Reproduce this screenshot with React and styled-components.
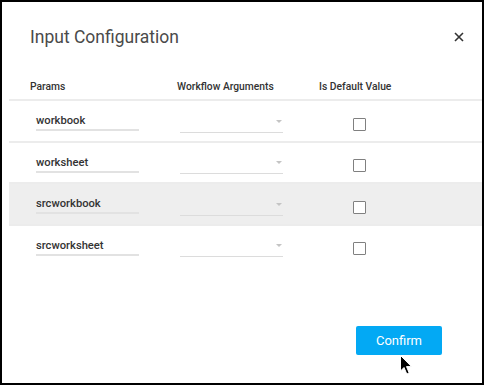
import React from 'react';
import styled, { createGlobalStyle } from 'styled-components';

const GlobalStyle = createGlobalStyle`
  html, body {
    margin: 0;
    padding: 0;
    background: #fff;
  }
  body {
    font-family: Roboto, "Liberation Sans", sans-serif;
  }
`;

const Frame = styled.div`
  position: relative;
  width: 484px;
  height: 385px;
  box-sizing: border-box;
  border: 2px solid #000;
  background: #fff;
  display: flex;
  flex-direction: column;
`;

const TitleBar = styled.div`
  display: flex;
  align-items: center;
  justify-content: space-between;
  height: 24px;
  margin-top: 23px;
  padding: 0 18px 0 28px;
`;

const Title = styled.h2`
  margin: 0;
  font-size: 17.5px;
  font-weight: 400;
  line-height: 24px;
  color: #4a4a4a;
`;

const CloseButton = styled.button`
  border: 0;
  background: none;
  padding: 0;
  width: 10px;
  height: 10px;
  display: flex;
  cursor: pointer;
`;

const Table = styled.div`
  margin: 30px 0 0 7px;
`;

const Grid = styled.div`
  display: grid;
  grid-template-columns: 147px 142px 1fr;
  align-items: center;
  padding-left: 21px;
`;

const HeadRow = styled(Grid)`
  height: 16px;
  padding-bottom: 4px;
  border-bottom: 2px solid #ececec;
`;

const HeadCell = styled.div`
  font-size: 10.3px;
  font-weight: 500;
  line-height: 16px;
  color: #333;
`;

const Row = styled(Grid)`
  height: 39.5px;
  border-bottom: ${p => (p.$last ? '0' : '2px solid #ececec')};
  background: ${p => (p.$shaded ? '#eeeeee' : 'transparent')};
`;

const ParamInput = styled.div`
  margin-left: 6px;
  width: 103px;
  box-sizing: border-box;
  padding-top: 3px;
  height: 21px;
  border-bottom: 2px solid #e2e2e2;
  font-size: 11.2px;
  font-weight: 500;
  line-height: 16px;
  color: #333;
`;

const Select = styled.div`
  margin: 2px 0 0 3px;
  width: 103px;
  height: 22px;
  box-sizing: border-box;
  border-bottom: 1px solid #dcdcdc;
  display: flex;
  align-items: center;
  justify-content: flex-end;
  padding-right: 1px;
`;

const Caret = styled.span`
  width: 0;
  height: 0;
  border-left: 3.5px solid transparent;
  border-right: 3.5px solid transparent;
  border-top: 3px solid #c4c4c4;
`;

const CheckBox = styled.span`
  margin: 7px 0 0 34px;
  width: 13px;
  height: 13px;
  box-sizing: border-box;
  border: 1.5px solid #808080;
  border-radius: 1px;
  background: #fff;
`;

const Footer = styled.div`
  margin-top: auto;
  display: flex;
  justify-content: flex-end;
  padding: 0 40px 28px 0;
`;

const ConfirmButton = styled.button`
  width: 86px;
  height: 29px;
  border: 0;
  border-radius: 2px;
  background: #03a9f4;
  color: #fff;
  font-family: Roboto, "Liberation Sans", sans-serif;
  font-size: 13px;
  font-weight: 400;
  cursor: pointer;
`;

const Pointer = styled.svg`
  position: absolute;
  left: 397px;
  top: 352px;
  pointer-events: none;
`;

const params = ['workbook', 'worksheet', 'srcworkbook', 'srcworksheet'];

export default function App() {
  return (
    <>
      <GlobalStyle />
      <Frame>
        <TitleBar>
          <Title>Input Configuration</Title>
          <CloseButton aria-label="Close">
            <svg width="10" height="10" viewBox="0 0 10 10">
              <path d="M1 1L9 9M9 1L1 9" stroke="#333" strokeWidth="1.6" />
            </svg>
          </CloseButton>
        </TitleBar>
        <Table>
          <HeadRow>
            <HeadCell>Params</HeadCell>
            <HeadCell>Workflow Arguments</HeadCell>
            <HeadCell>Is Default Value</HeadCell>
          </HeadRow>
          {params.map((name, i) => (
            <Row key={name} $shaded={i === 2} $last={i === params.length - 1}>
              <ParamInput>{name}</ParamInput>
              <Select>
                <Caret />
              </Select>
              <CheckBox />
            </Row>
          ))}
        </Table>
        <Footer>
          <ConfirmButton>Confirm</ConfirmButton>
        </Footer>
        <Pointer width="14" height="22" viewBox="0 0 14 22">
          <path
            d="M1.5 1.5L1.5 17L5 13.5L7.8 20L10.2 19L7.5 12.6L12.5 12.6Z"
            fill="#000"
            stroke="#fff"
            strokeWidth="1"
            strokeLinejoin="round"
          />
        </Pointer>
      </Frame>
    </>
  );
}
